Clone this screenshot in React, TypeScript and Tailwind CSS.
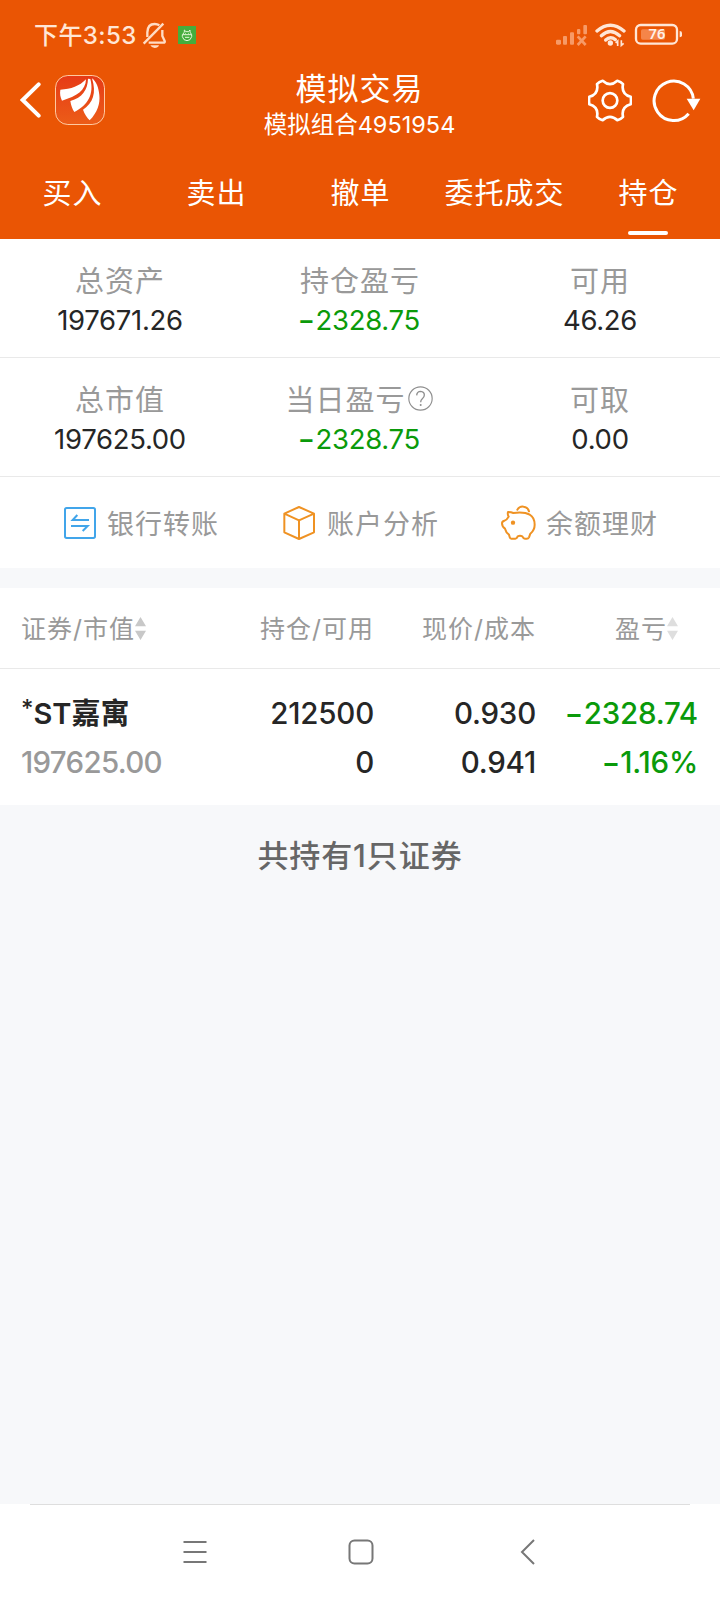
import clsx from "clsx";

interface SummaryItem {
    label: string;
    value: string;
    help?: boolean;
}

const TABS = ["买入", "卖出", "撤单", "委托成交", "持仓"];
const ACTIVE_TAB = "持仓";

const SUMMARY: SummaryItem[][] = [
    [
        { label: "总资产", value: "197671.26" },
        { label: "持仓盈亏", value: "-2328.75" },
        { label: "可用", value: "46.26" },
    ],
    [
        { label: "总市值", value: "197625.00" },
        { label: "当日盈亏", value: "-2328.75", help: true },
        { label: "可取", value: "0.00" },
    ],
];

const StatusIcons = () => (
    <svg width="128" height="28" viewBox="0 0 384 84" fill="none">
        {/* signal */}
        <g fill="#f79a67">
            <rect x="0" y="56" width="15" height="15" rx="4" />
            <rect x="21" y="45" width="12" height="26" rx="3" />
            <rect x="42" y="34" width="12" height="37" rx="3" />
            <rect x="63" y="24" width="10" height="16" rx="3" />
            <rect x="82" y="12" width="11" height="28" rx="3" />
        </g>
        <path d="M65 46 L89 72 M89 46 L65 72" stroke="#f79a67" strokeWidth="8" />
        {/* wifi */}
        <g stroke="#ffe6d6" strokeWidth="10" strokeLinecap="round">
            <path d="M123 30 Q163 -5 204 30" />
            <path d="M136 44 Q163 19 191 44" />
            <path d="M149 57 Q163 44 178 56" />
        </g>
        <circle cx="163" cy="66" r="8" fill="#ffe6d6" />
        <path d="M185 75 V60 L179 66 M196 58 V73 L203 67" stroke="#ffe6d6" strokeWidth="5" />
        {/* battery */}
        <rect x="240" y="12" width="123" height="56" rx="14" stroke="#ffe6d6" strokeWidth="7" />
        <path d="M371 30 Q378 30 378 36 V43 Q378 49 371 49 Z" fill="#ffe6d6" />
        <rect x="255" y="25" width="72" height="31" rx="5" fill="#f58549" />
        <text x="303" y="55" textAnchor="middle" fill="#fff1e8" fontSize="44" fontWeight="600" fontFamily="Noto Sans, sans-serif">
            76
        </text>
    </svg>
);

const BellOff = () => (
    <svg width="25" height="28" viewBox="0 0 75 84" fill="none" stroke="#ffdcc5" strokeWidth="7">
        <path d="M16 48 V34 Q17 9 38 9 Q46 9 52 13" />
        <path d="M61 27 V45 L68 60 Q70 65 64 65 H20" />
        <path d="M5 68 L64 8" strokeWidth="7" />
        <path d="M25 73 H51 Q48 81 38 81 Q29 81 25 73 Z" fill="#ffdcc5" stroke="none" />
    </svg>
);

const AndroidBadge = () => (
    <svg width="18" height="18" viewBox="0 0 54 54" fill="none">
        <rect width="54" height="54" fill="#45ad3d" />
        <path d="M13 26 H41 V32 Q38 44 27 44 Q16 44 13 32 Z M15 26 Q16 19 19 19 V12 L24 17 H31 L36 12 V19 Q39 20 40 26" stroke="#e4f8d8" strokeWidth="3" />
        <path d="M22 22 H24 M31 22 H33 M21 34 H34" stroke="#e4f8d8" strokeWidth="3" />
    </svg>
);

const Logo = () => (
    <svg width="50" height="50" viewBox="0 0 150 150">
        <defs>
            <linearGradient id="logo" x1="0" y1="0" x2="0" y2="1">
                <stop offset="0" stopColor="#e63a17" />
                <stop offset="1" stopColor="#ec5d18" />
            </linearGradient>
        </defs>
        <rect x="1.5" y="1.5" width="147" height="147" rx="37" fill="url(#logo)" stroke="#ffc9a0" strokeWidth="3" />
        <g fill="#fff">
            <path d="M16 44 C48 43 74 33 93 13 C92 46 66 64 21 77 C16 66 14 56 16 44 Z" />
            <path d="M99 11 C98 45 82 67 46 78 C48 92 52 102 58 111 C98 91 118 58 106 12 Z" />
            <path d="M111 10 C125 55 114 84 84 104 C89 118 96 128 104 136 C127 113 136 85 133 60 C131 38 124 20 111 10 Z" />
        </g>
    </svg>
);

const Gear = () => (
    <svg width="44" height="43" viewBox="0 0 132 128" fill="none" stroke="#fff" strokeWidth="8" strokeLinejoin="round">
        <path d="M128 75 Q99 83 105 113 Q99 120 88 123 Q66 103 44 123 Q33 120 27 113 Q33 83 4 75 Q2 64 4 53 Q33 45 27 15 Q33 8 44 5 Q66 25 88 5 Q99 8 105 15 Q99 45 128 53 Q130 64 128 75 Z" />
        <circle cx="66" cy="64" r="22" />
    </svg>
);

const Refresh = () => (
    <svg width="49" height="45" viewBox="0 0 147 135" fill="none">
        <path d="M124 62 A59 59 0 1 0 110 107" stroke="#fff" strokeWidth="9" />
        <path d="M104 62 H145 L125 97 Z" fill="#fff" />
    </svg>
);

const TransferIcon = () => (
    <svg width="32" height="32" viewBox="0 0 96 96" fill="none" stroke="#41a5ea" strokeWidth="6">
        <rect x="3" y="3" width="90" height="90" rx="5" />
        <path d="M75 39 H26 L40 24 M21 57 H71 L56 72" />
    </svg>
);

const CubeIcon = () => (
    <svg width="32" height="34" viewBox="0 0 96 102" fill="none" stroke="#ef9223" strokeWidth="6" strokeLinejoin="round">
        <path d="M48 3 L93 23 V79 L48 99 L4 79 V23 Z M4 23 L48 43 L93 23 M48 43 V99" />
    </svg>
);

const PiggyIcon = () => (
    <svg width="35" height="35" viewBox="0 0 105 105" fill="none" stroke="#ef9223" strokeWidth="6" strokeLinejoin="round" strokeLinecap="round">
        <path d="M21 21 Q31 21 37 24 Q70 20 86 29 Q101 38 101 59 Q101 75 88 86 L84 97 Q82 101 77 101 H72 Q67 101 64 94 Q57 91 50 94 Q48 101 43 101 H31 Q27 101 26 96 L24 89 Q15 83 12 71 Q3 65 3 55 Q3 49 10 47 Q18 45 23 35 Q19 29 21 21 Z" />
        <path d="M49 14 Q56 3 68 5 Q80 6 84 19" />
        <circle cx="36" cy="53" r="6.500" fill="#ef9223" stroke="none" />
    </svg>
);

const HelpIcon = () => (
    <svg width="25" height="25" viewBox="0 0 75 75" fill="none" stroke="#8f8f8f" strokeWidth="3.5" className="mr-[2px] mb-[5px] ml-[2px]">
        <circle cx="37.500" cy="37.500" r="35" />
        <path d="M26 28 Q27 16 38 16 Q49 17 49 27 Q49 33 43 38 Q38 42 38 49" strokeWidth="4" />
        <circle cx="38" cy="57" r="3" fill="#8f8f8f" stroke="none" />
    </svg>
);

const SortArrows = ({ className }: { className: string }) => (
    <svg width="11" height="23" viewBox="0 0 33 69" className={clsx("mb-1", className)} fill="currentColor">
        <path d="M16.500 0 L33 28 H0 Z M16.500 69 L0 41 H33 Z" />
    </svg>
);

// The minus sign is drawn wider than the plain hyphen glyph
const Amount = ({ value }: { value: string }) =>
    value.startsWith("-") ? (
        <>
            <span className="mr-[3px] inline-block scale-x-[1.35] font-semibold">-</span>
            {value.slice(1)}
        </>
    ) : (
        <>{value}</>
    );

const SummaryRow = ({ items }: { items: SummaryItem[] }) => (
    <div className="grid h-[119px] grid-cols-3 border-b border-[#e9e9e9] pt-[25px] text-center">
        {items.map((item) => (
            <div key={item.label}>
                <div className="flex h-9 items-center justify-center text-[29px] leading-9 tracking-[1px] text-[#999]">
                    {item.label}
                    {item.help && <HelpIcon />}
                </div>
                <div
                    className={clsx(
                        "h-10 text-[27.5px] leading-10 tracking-[-0.3px]",
                        item.value.startsWith("-") ? "text-[#0a9a0a]" : "text-[#262626]"
                    )}
                >
                    <Amount value={item.value} />
                </div>
            </div>
        ))}
    </div>
);

export default function App() {
    return (
        <div className="flex h-[1600px] w-[720px] flex-col overflow-hidden bg-[#f7f8fa] font-['Inter','Noto_Sans_CJK_SC',sans-serif] whitespace-nowrap">
            <header className="h-[239px] bg-[#ea5504] text-white">
                <div className="flex h-[70px] items-center pr-[36px] pl-[34px] text-[#ffe6d6]">
                    <span className="pt-[2px] text-[24px] leading-8 font-medium tracking-[0.4px]">下午3:53</span>
                    <span className="ml-[5px]"><BellOff /></span>
                    <span className="ml-[11px]"><AndroidBadge /></span>
                    <span className="ml-auto"><StatusIcons /></span>
                </div>

                <div className="grid h-[70px] grid-cols-[1fr_auto_1fr] items-start">
                    <div className="flex items-center pt-[5px] pl-5">
                        <svg width="22" height="36" viewBox="0 0 66 108" fill="none" stroke="#fff" strokeWidth="12" strokeLinecap="round">
                            <path d="M56 7 L8 54 L56 101" />
                        </svg>
                        <span className="ml-[13px]"><Logo /></span>
                    </div>
                    <div className="-ml-px text-center">
                        <h1 className="text-[31px] leading-[37px] tracking-[1px]">模拟交易</h1>
                        <p className="pt-[2px] text-[23.500px] leading-8">模拟组合4951954</p>
                    </div>
                    <div className="flex items-center justify-end pt-2 pr-[19px]">
                        <Gear />
                        <span className="ml-[20px]"><Refresh /></span>
                    </div>
                </div>

                <nav className="grid h-[99px] grid-cols-5 pt-[34px] text-center text-[29px] leading-10 tracking-[1px]">
                    {TABS.map((tab) => (
                        <div key={tab} className="flex flex-col items-center">
                            <span className="pl-px">{tab}</span>
                            {tab === ACTIVE_TAB && <span className="mt-[17px] h-1 w-10 rounded-sm bg-white" />}
                        </div>
                    ))}
                </nav>
            </header>

            <section className="bg-white">
                {SUMMARY.map((items) => (
                    <SummaryRow key={items[0].label} items={items} />
                ))}
                <div className="flex h-[91px] items-center justify-between pr-[62px] pl-16 text-[27px] tracking-[1px] text-[#999]">
                    <div className="flex items-center gap-[11px]"><TransferIcon /><span className="pt-[5px]">银行转账</span></div>
                    <div className="flex items-center gap-3 pl-[2px]"><CubeIcon /><span className="pt-[5px]">账户分析</span></div>
                    <div className="flex items-center gap-[10px]"><PiggyIcon /><span className="pt-[5px]">余额理财</span></div>
                </div>
            </section>

            <section className="mt-5 bg-white">
                <div className="grid h-[81px] grid-cols-[210px_164px_162px_142px] items-center border-b border-[#e9e9e9] pt-1 text-right text-[25px] tracking-[1px] text-[#999]">
                    <div className="flex items-center pl-[21px]">
                        证券/市值<SortArrows className="text-[#c8c8c8]" />
                    </div>
                    <div>持仓/可用</div>
                    <div>现价/成本</div>
                    <div className="flex items-center justify-end">
                        盈亏<SortArrows className="text-[#dedede]" />
                    </div>
                </div>
                <div className="grid h-[136px] auto-rows-[49px] grid-cols-[210px_164px_162px_162px] pt-5 text-right text-[29.500px] leading-[49px] font-medium tracking-[-0.2px] text-[#262626]">
                    <div className="flex pl-[21px] text-left text-[29px] font-semibold tracking-[0px]">
                        <span className="text-[24px] leading-[40px] font-medium">*</span>ST嘉寓
                    </div>
                    <div>212500</div>
                    <div>0.930</div>
                    <div className="text-[#0a9a0a]"><Amount value="-2328.74" /></div>
                    <div className="pl-[21px] text-left tracking-[-0.7px] text-[#999]">197625.00</div>
                    <div>0</div>
                    <div>0.941</div>
                    <div className="text-[#0a9a0a]"><Amount value="-1.16%" /></div>
                </div>
            </section>

            <p className="mt-[31px] text-center text-[31px] leading-10 font-medium tracking-[0.9px] text-[#666]">共持有1只证券</p>

            <footer className="mt-auto h-24 bg-white">
                <div className="mx-[30px] border-t border-[#dedede]" />
                <div className="flex h-[93px] items-center pl-[183px] text-[#777]">
                    <svg width="24" height="24" viewBox="0 0 24 24" stroke="currentColor" strokeWidth="2">
                        <path d="M0.500 2 H23.500 M0.500 12 H23.500 M0.500 22 H23.500" />
                    </svg>
                    <svg width="26" height="26" viewBox="0 0 26 26" fill="none" stroke="currentColor" strokeWidth="2" className="ml-[141px]">
                        <rect x="1.500" y="1.500" width="23" height="23" rx="5" />
                    </svg>
                    <svg width="16" height="26" viewBox="0 0 16 26" fill="none" stroke="currentColor" strokeWidth="2" className="ml-[146px]">
                        <path d="M14 1 L2 13 L14 25" />
                    </svg>
                </div>
            </footer>
        </div>
    );
}
